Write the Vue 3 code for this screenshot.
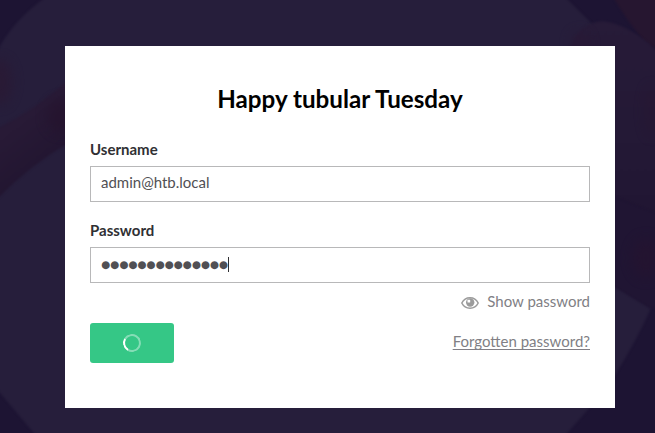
<script setup>
const username = 'admin@htb.local'
const mask = '●'.repeat(14)
</script>

<template>
  <main class="page">
    <svg class="backdrop" viewBox="0 0 655 433" aria-hidden="true">
      <defs>
        <filter id="soft" x="-20%" y="-20%" width="140%" height="140%" color-interpolation-filters="sRGB"><feGaussianBlur stdDeviation="1.2" /></filter>
        <filter id="haze" x="-150%" y="-150%" width="400%" height="400%" color-interpolation-filters="sRGB"><feGaussianBlur stdDeviation="6" /></filter>
        <linearGradient id="stem" x1="0" y1="0" x2=".45" y2="1">
          <stop offset="0" stop-color="#261d3b" />
          <stop offset=".42" stop-color="#281a36" />
          <stop offset="1" stop-color="#20142f" />
        </linearGradient>
        <linearGradient id="petal" x1="0" y1="0" x2="0" y2="1">
          <stop offset="0" stop-color="#271b38" />
          <stop offset=".6" stop-color="#241936" />
          <stop offset="1" stop-color="#211633" />
        </linearGradient>
      </defs>
      <rect width="655" height="433" fill="#1d1433" />
      <path d="M46-3Q16 18 0 46L-5 60V385L0 393L38 438H563L592 405L615 375Q637 340 651 308L615 286V40L592 24L565-3Z" fill="#261e3b" filter="url(#soft)" />
      <path d="M-5 129Q36 110 70 78V142Q30 165 -5 201Z" fill="url(#stem)" filter="url(#soft)" />
      <ellipse cx="62" cy="116" rx="15" ry="17" fill="#25122c" opacity=".6" filter="url(#haze)" />
      <ellipse cx="0" cy="82" rx="12" ry="23" fill="#2a1934" opacity=".8" filter="url(#haze)" />
      <path d="M613-3H658V50L645 42Q626 20 613-3Z" fill="#261630" filter="url(#soft)" />
      <path d="M568 52Q577 24 602 21Q629 24 658 52V215L610 195Z" fill="url(#petal)" filter="url(#soft)" />
      <path d="M610 195L660 215V310L650 308L610 284Z" fill="#201533" filter="url(#soft)" />
      <ellipse cx="580" cy="42" rx="9" ry="10" fill="#2a1935" opacity=".6" filter="url(#haze)" />
      <ellipse cx="652" cy="111" rx="6" ry="25" fill="#291630" opacity=".5" filter="url(#haze)" />
      <ellipse cx="646" cy="258" rx="14" ry="20" fill="#26132f" opacity=".6" filter="url(#haze)" />
    </svg>

    <form class="card" @submit.prevent>
      <h1>Happy tubular Tuesday</h1>
      <div class="field">
        <span class="label">Username</span>
        <div class="control">{{ username }}</div>
      </div>
      <div class="field">
        <span class="label">Password</span>
        <div class="control"><span class="mask">{{ mask }}</span><i class="caret"></i></div>
      </div>
      <div class="toggle">
        <svg class="eye" viewBox="0 0 18 12" aria-hidden="true">
          <path d="M.8 6C2.500 2.600 5.500.8 9 .8S15.500 2.600 17.200 6C15.500 9.400 12.500 11.200 9 11.200S2.500 9.400.8 6Z" fill="none" stroke="#9b9b9b" stroke-width="1.5" />
          <circle cx="9.200" cy="5.500" r="4.200" fill="#9b9b9b" />
          <rect x="6.500" y="2.800" width="2.700" height="2.800" rx=".6" fill="#fff" />
        </svg>
        <span>Show password</span>
      </div>
      <div class="actions">
        <button class="submit" type="submit" aria-label="Login"><i class="spinner"></i></button>
        <a class="forgot">Forgotten password?</a>
      </div>
    </form>
  </main>
</template>

<style>
body { margin: 0; overflow: hidden; }
</style>

<style scoped>
.page {
  position: relative;
  box-sizing: border-box;
  width: 655px;
  height: 433px;
  padding: 46px 40px 25px 65px;
  background: #1d1433;
  font-family: Lato, "Liberation Sans", sans-serif;
  font-size: 15px;
  line-height: 20px;
  overflow: hidden;
}
.backdrop { position: absolute; inset: 0; width: 655px; height: 433px; }
.card {
  position: relative;
  box-sizing: border-box;
  width: 550px;
  height: 362px;
  padding: 38px 25px 0;
  background: #fff;
}
h1 {
  margin: 0 0 25px;
  color: #000;
  font-size: 24.2px;
  line-height: 30px;
  font-weight: 700;
  text-align: center;
}
.field { margin-bottom: 18px; }
.label {
  display: block;
  height: 20px;
  margin-bottom: 7px;
  color: #303033;
  font-weight: 700;
}
.control {
  box-sizing: border-box;
  display: flex;
  align-items: center;
  height: 36px;
  padding: 0 10px 4px;
  border: 1px solid #b8b8b9;
  color: #515054;
}
.mask {
  padding-top: 2px;
  font-family: "DejaVu Sans", sans-serif;
  font-size: 10.4px;
}
.caret { width: 1px; height: 15px; margin-top: 3px; background: #303033; }
.toggle {
  display: flex;
  justify-content: flex-end;
  align-items: center;
  gap: 8px;
  margin-top: -10px;
  color: #817f85;
}
.eye { width: 18px; height: 12px; margin-top: 4px; }
.actions {
  display: flex;
  justify-content: space-between;
  align-items: center;
  margin-top: 12px;
}
.submit {
  display: flex;
  align-items: center;
  justify-content: center;
  width: 84px;
  height: 40px;
  padding: 0;
  border: 0;
  border-radius: 3px;
  background: #35c786;
}
.spinner {
  box-sizing: border-box;
  width: 18px;
  height: 18px;
  border: 2px solid rgba(255, 255, 255, .4);
  border-left-color: #fff;
  border-radius: 50%;
  transform: rotate(-15deg);
}
.forgot {
  margin-top: -5px;
  color: #817f85;
  text-decoration: underline;
  text-decoration-skip-ink: none;
  text-decoration-thickness: 1px;
  text-underline-offset: 2px;
}
</style>
